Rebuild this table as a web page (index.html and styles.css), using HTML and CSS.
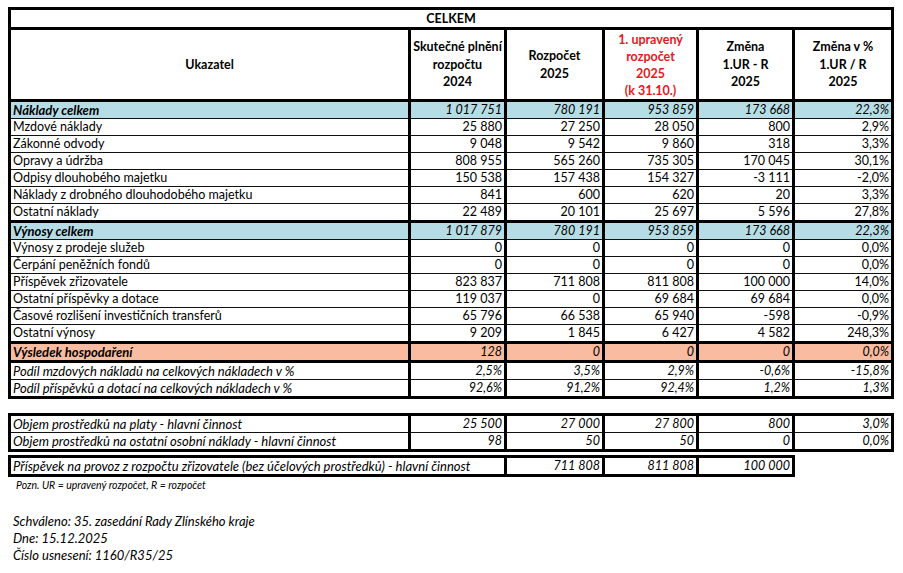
FILE: index.html
```html
<!DOCTYPE html>
<html lang="cs">
<head>
<meta charset="utf-8">
<title>CELKEM</title>
<link rel="stylesheet" href="styles.css">
</head>
<body>
<div class="page">
<table class="grid main">
  <colgroup><col class="c0"><col class="c1"><col class="c2"><col class="c3"><col class="c4"><col class="c5"></colgroup>
  <tr class="title"><td colspan="6">CELKEM</td></tr>
  <tr class="head">
    <th>Ukazatel</th>
    <th>Skutečné plnění<br>rozpočtu<br>2024</th>
    <th>Rozpočet<br>2025</th>
    <th class="red">1. upravený<br>rozpočet<br>2025<br>(k 31.10.)</th>
    <th>Změna<br>1.UR - R<br>2025</th>
    <th>Změna v %<br>1.UR / R<br>2025</th>
  </tr>
  <tr class="tot thick"><td>Náklady celkem</td><td>1 017 751</td><td>780 191</td><td>953 859</td><td>173 668</td><td>22,3%</td></tr>
  <tr><td>Mzdové náklady</td><td>25 880</td><td>27 250</td><td>28 050</td><td>800</td><td>2,9%</td></tr>
  <tr><td>Zákonné odvody</td><td>9 048</td><td>9 542</td><td>9 860</td><td>318</td><td>3,3%</td></tr>
  <tr><td>Opravy a údržba</td><td>808 955</td><td>565 260</td><td>735 305</td><td>170 045</td><td>30,1%</td></tr>
  <tr><td>Odpisy dlouhobého majetku</td><td>150 538</td><td>157 438</td><td>154 327</td><td>-3 111</td><td>-2,0%</td></tr>
  <tr><td>Náklady z drobného dlouhodobého majetku</td><td>841</td><td>600</td><td>620</td><td>20</td><td>3,3%</td></tr>
  <tr><td>Ostatní náklady</td><td>22 489</td><td>20 101</td><td>25 697</td><td>5 596</td><td>27,8%</td></tr>
  <tr class="tot thick"><td>Výnosy celkem</td><td>1 017 879</td><td>780 191</td><td>953 859</td><td>173 668</td><td>22,3%</td></tr>
  <tr><td>Výnosy z prodeje služeb</td><td>0</td><td>0</td><td>0</td><td>0</td><td>0,0%</td></tr>
  <tr><td>Čerpání peněžních fondů</td><td>0</td><td>0</td><td>0</td><td>0</td><td>0,0%</td></tr>
  <tr><td>Příspěvek zřizovatele</td><td>823 837</td><td>711 808</td><td>811 808</td><td>100 000</td><td>14,0%</td></tr>
  <tr><td>Ostatní příspěvky a dotace</td><td>119 037</td><td>0</td><td>69 684</td><td>69 684</td><td>0,0%</td></tr>
  <tr><td>Časové rozlišení investičních transferů</td><td>65 796</td><td>66 538</td><td>65 940</td><td>-598</td><td>-0,9%</td></tr>
  <tr><td>Ostatní výnosy</td><td>9 209</td><td>1 845</td><td>6 427</td><td>4 582</td><td>248,3%</td></tr>
  <tr class="res thick"><td>Výsledek hospodaření</td><td>128</td><td>0</td><td>0</td><td>0</td><td>0,0%</td></tr>
  <tr class="it thick"><td>Podíl mzdových nákladů na celkových nákladech v %</td><td>2,5%</td><td>3,5%</td><td>2,9%</td><td>-0,6%</td><td>-15,8%</td></tr>
  <tr class="it"><td>Podíl příspěvků a dotací na celkových nákladech v %</td><td>92,6%</td><td>91,2%</td><td>92,4%</td><td>1,2%</td><td>1,3%</td></tr>
</table>

<table class="grid extra">
  <colgroup><col class="c0"><col class="c1"><col class="c2"><col class="c3"><col class="c4"><col class="c5"></colgroup>
  <tr class="it"><td>Objem prostředků na platy - hlavní činnost</td><td>25 500</td><td>27 000</td><td>27 800</td><td>800</td><td>3,0%</td></tr>
  <tr class="it"><td>Objem prostředků na ostatní osobní náklady - hlavní činnost</td><td>98</td><td>50</td><td>50</td><td>0</td><td>0,0%</td></tr>
</table>

<table class="grid contrib">
  <colgroup><col class="c0"><col class="c1"><col class="c2"><col class="c3"><col class="c4"></colgroup>
  <tr class="it"><td colspan="2">Příspěvek na provoz z rozpočtu zřizovatele (bez účelových prostředků) - hlavní činnost</td><td>711 808</td><td>811 808</td><td>100 000</td></tr>
</table>

<p class="note">Pozn. UR = upravený rozpočet, R = rozpočet</p>

<div class="approval">
  <p>Schváleno: 35. zasedání Rady Zlínského kraje</p>
  <p>Dne: 15.12.2025</p>
  <p>Číslo usnesení: 1160/R35/25</p>
</div>
</div>
</body>
</html>
```
FILE: styles.css
```css
html, body {
  margin: 0;
  background: #fff;
}
body {
  font-family: Lato, "Liberation Sans", sans-serif;
  font-size: 12.5px;
  color: #000;
}
.page {
  padding: 7px 0 0 8px;
}
.grid {
  border-collapse: collapse;
  table-layout: fixed;
  border: 3px solid #000;
}
.main, .extra { width: 886px; }
.contrib { width: 787px; }
.c0 { width: 400px; }
.c1 { width: 96px; }
.c2 { width: 98px; }
.c3 { width: 94px; }
.c4 { width: 96px; }
.c5 { width: 99px; }

.grid td, .grid th {
  border-top: 1px solid #111;
  border-bottom: 1px solid #111;
  border-left: 3px solid #000;
  border-right: 3px solid #000;
  padding: 0 2px 1px;
  height: 15px;
  line-height: 14px;
  vertical-align: bottom;
  text-align: right;
  white-space: nowrap;
  overflow: hidden;
}
.grid td:first-child { text-align: left; }
.title td {
  text-align: center !important;
  font-weight: 700;
  height: 17px;
  padding: 0 2px;
  vertical-align: middle;
  border-bottom: 3px solid #000;
}
.head th {
  height: 67px;
  padding: 0 2px;
  text-align: center;
  vertical-align: middle;
  font-weight: 700;
  line-height: 17.5px;
  border-bottom: 3px solid #000;
}
.head th.red { color: #e8161b; line-height: 17px; padding-top: 1px; }
.thick td { border-top: 3px solid #000; }
.tot td { background: #b6dde6; font-style: italic; }
.tot td:first-child { font-weight: 700; font-size: 13px; }
.res td { background: #f9bca0; font-style: italic; }
.res td:first-child { font-weight: 700; font-size: 13px; }
.it td { font-style: italic; }
.it td:first-child { font-size: 13px; }

.extra { margin-top: 14px; }
.contrib { margin-top: 3px; }
.extra td, .contrib td { border-top: 1px solid #111; }

.note {
  margin: 2px 0 0 8px;
  font-size: 10.5px;
  font-style: italic;
  line-height: 12px;
}
.approval {
  margin-top: 22px;
  padding-left: 5px;
  font-style: italic;
  font-size: 13px;
}
.approval p {
  margin: 0;
  line-height: 17px;
}
```
